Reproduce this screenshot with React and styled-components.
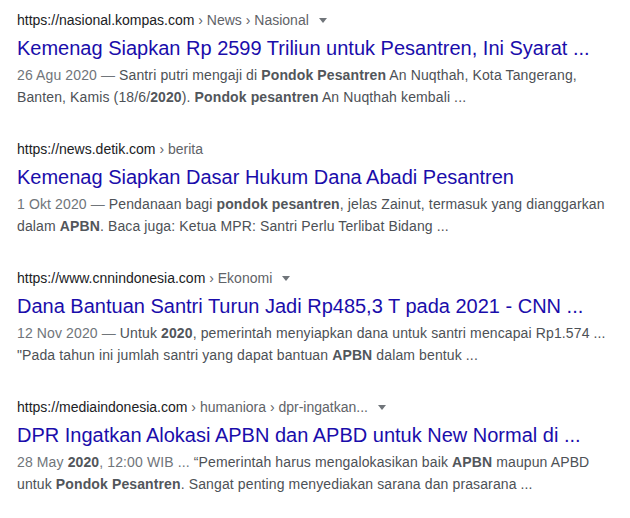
import React from 'react';
import styled, { createGlobalStyle } from 'styled-components';

const GlobalStyle = createGlobalStyle`
  html, body {
    margin: 0;
    padding: 0;
    background: #fff;
  }
  body {
    font-family: 'Liberation Sans', Arial, sans-serif;
  }
`;

const Page = styled.div`
  width: 630px;
  height: 518px;
  padding: 10px 0 0 17px;
  box-sizing: border-box;
  overflow: hidden;
  display: flex;
  flex-direction: column;
  gap: 31px;
`;

const Result = styled.div`
  display: flex;
  flex-direction: column;
`;

const Cite = styled.div`
  display: flex;
  align-items: center;
  font-size: 14px;
  line-height: 20px;
  height: 20px;
  color: #202124;
  white-space: nowrap;
`;

const Crumbs = styled.span`
  color: #5f6368;
`;

const Caret = styled.span`
  display: inline-block;
  width: 0;
  height: 0;
  margin-left: 10px;
  margin-top: 1px;
  border-left: 4px solid transparent;
  border-right: 4px solid transparent;
  border-top: 5px solid #70757a;
`;

const Title = styled.h3`
  margin: 0;
  padding-top: 5px;
  font-size: 20px;
  font-weight: normal;
  line-height: 26px;
  color: #1a0dab;
  white-space: nowrap;
`;

const Snippet = styled.div`
  margin-top: 3px;
  font-size: 14px;
  line-height: 22px;
  letter-spacing: 0.12px;
  color: #4d5156;
  white-space: nowrap;

  b {
    color: #52565b;
    font-weight: bold;
  }
`;

const Date = styled.span`
  color: #70757a;
`;

const results = [
  {
    url: 'https://nasional.kompas.com',
    crumbs: '› News › Nasional',
    caret: true,
    title: 'Kemenag Siapkan Rp 2599 Triliun untuk Pesantren, Ini Syarat ...',
    lines: [
      <>
        <Date>26 Agu 2020 — </Date>Santri putri mengaji di <b>Pondok Pesantren</b> An Nuqthah, Kota Tangerang,
      </>,
      <>
        Banten, Kamis (18/6/<b>2020</b>). <b>Pondok pesantren</b> An Nuqthah kembali ...
      </>,
    ],
  },
  {
    url: 'https://news.detik.com',
    crumbs: '› berita',
    caret: false,
    title: 'Kemenag Siapkan Dasar Hukum Dana Abadi Pesantren',
    lines: [
      <>
        <Date>1 Okt 2020 — </Date>Pendanaan bagi <b>pondok pesantren</b>, jelas Zainut, termasuk yang dianggarkan
      </>,
      <>
        dalam <b>APBN</b>. Baca juga: Ketua MPR: Santri Perlu Terlibat Bidang ...
      </>,
    ],
  },
  {
    url: 'https://www.cnnindonesia.com',
    crumbs: '› Ekonomi',
    caret: true,
    title: 'Dana Bantuan Santri Turun Jadi Rp485,3 T pada 2021 - CNN ...',
    lines: [
      <>
        <Date>12 Nov 2020 — </Date>Untuk <b>2020</b>, pemerintah menyiapkan dana untuk santri mencapai Rp1.574 ...
      </>,
      <>
        "Pada tahun ini jumlah santri yang dapat bantuan <b>APBN</b> dalam bentuk ...
      </>,
    ],
  },
  {
    url: 'https://mediaindonesia.com',
    crumbs: '› humaniora › dpr-ingatkan...',
    caret: true,
    title: 'DPR Ingatkan Alokasi APBN dan APBD untuk New Normal di ...',
    lines: [
      <>
        <Date>28 May <b>2020</b>, 12:00 WIB ... </Date>“Pemerintah harus mengalokasikan baik <b>APBN</b> maupun APBD
      </>,
      <>
        untuk <b>Pondok Pesantren</b>. Sangat penting menyediakan sarana dan prasarana ...
      </>,
    ],
  },
];

const App = () => {
  return (
    <>
      <GlobalStyle />
      <Page>
        {results.map((r) => (
          <Result key={r.url}>
            <Cite>
              {r.url}
              <Crumbs>&nbsp;{r.crumbs}</Crumbs>
              {r.caret && <Caret />}
            </Cite>
            <Title>{r.title}</Title>
            <Snippet>
              {r.lines.map((line, i) => (
                <div key={i}>{line}</div>
              ))}
            </Snippet>
          </Result>
        ))}
      </Page>
    </>
  );
};

export default App;
